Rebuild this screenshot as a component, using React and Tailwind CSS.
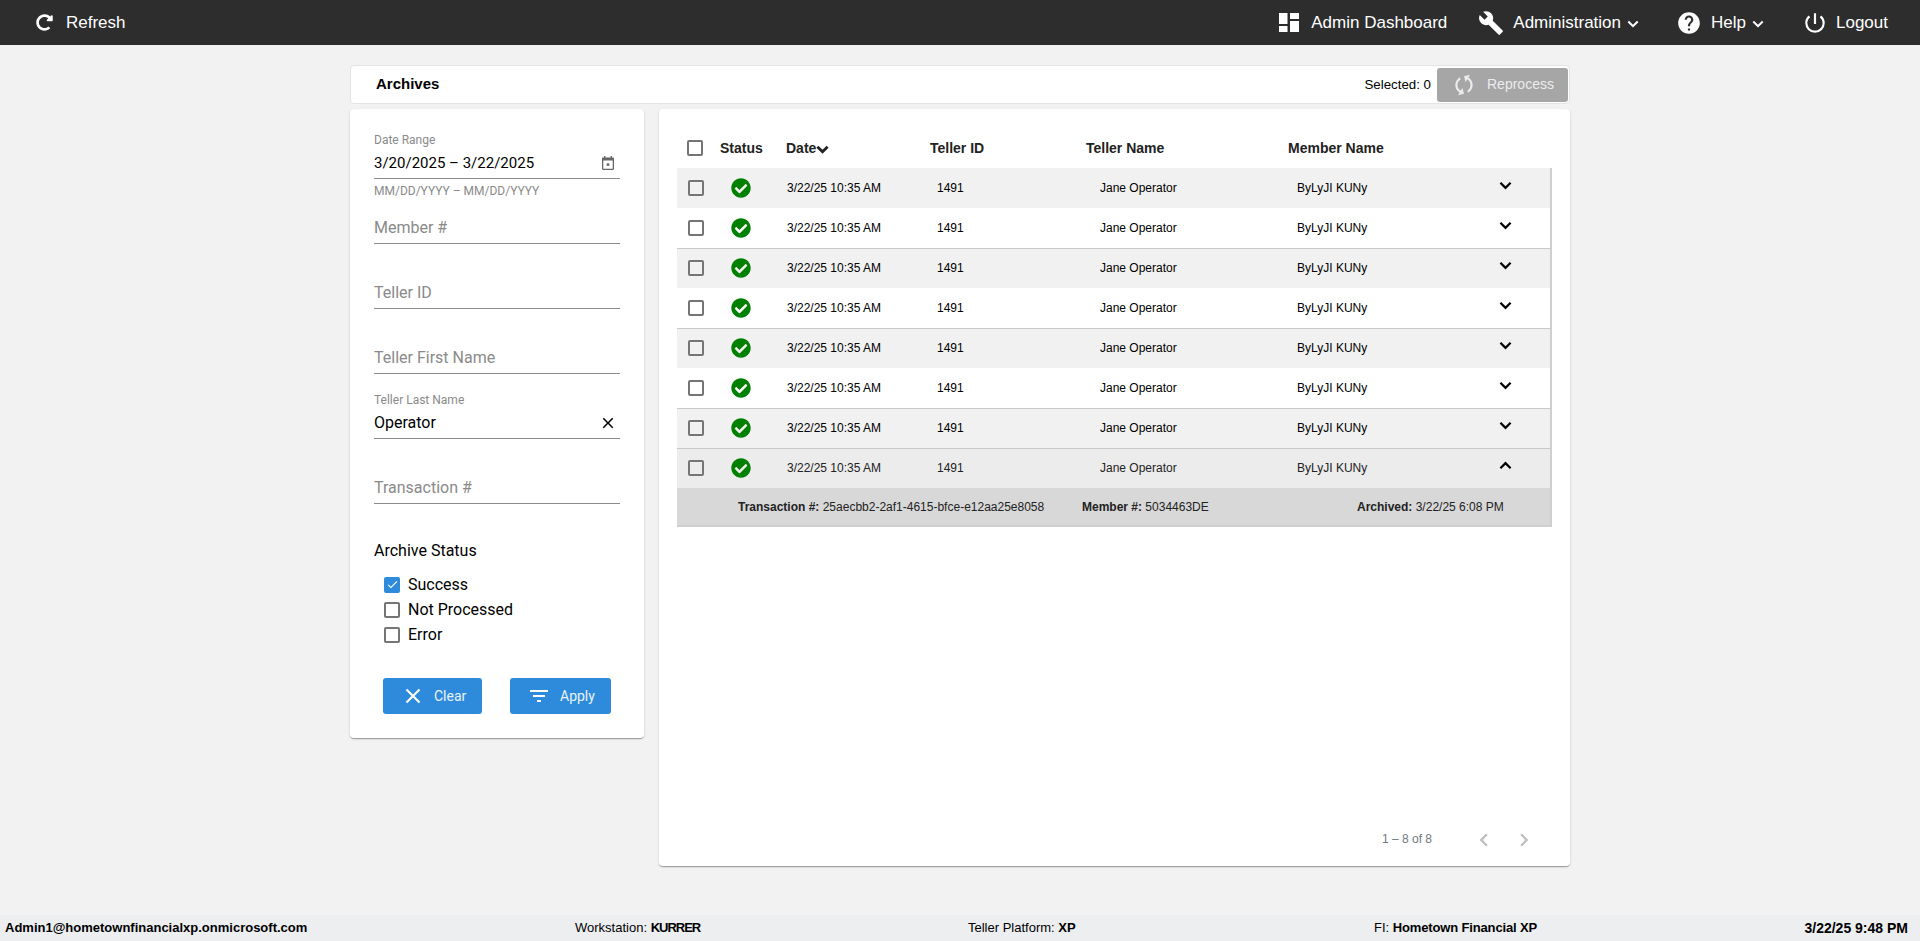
import { MdBuild, MdHelp, MdPowerSettingsNew, MdClose, MdFilterList, MdCached, MdChevronLeft, MdChevronRight, MdCheck } from 'react-icons/md'
import { FaCheckCircle, FaRedoAlt } from 'react-icons/fa'

const cardShadow = 'shadow-[0_2px_1px_-1px_rgba(0,0,0,0.2),0_1px_1px_0_rgba(0,0,0,0.14),0_1px_3px_0_rgba(0,0,0,0.12)]'

function Chevron({ up, className, width = 2.4 }) {
  return (
    <svg viewBox="0 0 14 9" className={className} fill="none" stroke="currentColor" strokeWidth={width}>
      <path d={up ? 'M1.5 7.5 7 2l5.5 5.5' : 'M1.5 1.5 7 7l5.5-5.5'} />
    </svg>
  )
}

function DashIcon() {
  return (
    <svg viewBox="0 0 20 19" className="w-[20px] h-[19px]" fill="#fff">
      <rect x="0" y="0" width="8.500" height="11" />
      <rect x="0" y="13" width="8.500" height="6" />
      <rect x="11" y="0" width="9" height="6" />
      <rect x="11" y="8" width="9" height="11" />
    </svg>
  )
}

function CalendarIcon() {
  return (
    <svg viewBox="0 0 12 14" className="w-3 h-[14px]" fill="#666">
      <path d="M2 0h1.400v1.400h5.200V0H10v1.400h.8c.7 0 1.200.5 1.200 1.200v10.200c0 .7-.5 1.200-1.200 1.200H1.200C.5 14 0 13.500 0 12.800V2.600c0-.7.5-1.200 1.200-1.200H2V0zM1.300 4.600v8.100h9.400V4.600H1.300z" />
      <rect x="4.700" y="7.300" width="2.600" height="2.600" />
    </svg>
  )
}

function Check({ checked, size = 'w-4 h-4' }) {
  if (checked) {
    return (
      <span className={`${size} rounded-[2px] bg-[#2e8bdb] flex items-center justify-center shrink-0`}>
        <MdCheck className="text-white w-[13px] h-[13px]" />
      </span>
    )
  }
  return <span className={`${size} rounded-[2px] border-2 border-[#757575] bg-transparent shrink-0`} />
}

function NavItem({ icon, label, caret, className }) {
  return (
    <div className={`flex items-center text-white text-[17px] ${className || ''}`}>
      {icon}
      <span>{label}</span>
      {caret && <Chevron className="w-[12px] h-[8px] ml-[6px] mt-[2px]" />}
    </div>
  )
}

function Field({ label, value, trailing, hint, className, valueClass }) {
  return (
    <div className={`relative w-[246px] ${className || ''}`}>
      <div className="h-[53px] border-b border-[#8c8c8c] flex flex-col justify-end pb-[3px]">
        {value && label && <div className="text-[12px] leading-[14px] text-[#8a8a8a] mb-[4px]">{label}</div>}
        <div className="flex items-center justify-between h-[24px] text-[16px]">
          {value
            ? <span className={`text-black ${valueClass || ''}`}>{value}</span>
            : <span className="text-[#8a8a8a]">{label}</span>}
          {trailing && <span className="flex items-center">{trailing}</span>}
        </div>
      </div>
      {hint && <div className="text-[12px] leading-[14px] text-[#8a8a8a] mt-[5px]">{hint}</div>}
    </div>
  )
}

function StatusOption({ label, checked }) {
  return (
    <div className="flex items-center h-[25px] text-[16px] text-black">
      <Check checked={checked} />
      <span className="ml-[8px]">{label}</span>
    </div>
  )
}

function Row({ shade, border, open }) {
  return (
    <div className={`flex items-center h-[40px] text-[12px] ${shade} ${border ? 'border-t border-[#c8c8c8] pb-[1px]' : ''} ${open ? 'text-[#222]' : 'text-black'}`}>
      <div className="w-[33px] pl-[11px] flex"><Check /></div>
      <div className="w-[62px] flex justify-center"><FaCheckCircle className="w-5 h-5 text-[#008000]" /></div>
      <div className="w-[158px] pl-[15px]">3/22/25 10:35 AM</div>
      <div className="w-[170px] pl-[7px]">1491</div>
      <div className="w-[197px]">Jane Operator</div>
      <div className="w-[188px]">ByLyJI KUNy</div>
      <div className="w-[40px] flex justify-center mb-[6px]"><Chevron up={open} className="w-[13px] h-[9px] text-black" /></div>
    </div>
  )
}

const shades = ['bg-[#f1f1f1]', 'bg-white', 'bg-[#f1f1f1]', 'bg-white', 'bg-[#f1f1f1]', 'bg-white', 'bg-[#f1f1f1]', 'bg-[#ececec]']

export default function App() {
  return (
    <div className="h-[941px] flex flex-col bg-[#f2f2f2] overflow-hidden font-['Roboto','Liberation_Sans',sans-serif]">
      {/* Top bar */}
      <header className="h-[45px] shrink-0 bg-[#2d2d2d] flex items-center justify-between pl-[36px] pr-[32px] font-['Liberation_Sans',Arial,sans-serif]">
        <NavItem icon={<FaRedoAlt className="w-[17px] h-[17px] mr-[13px]" />} label="Refresh" />
        <div className="flex items-center">
          <NavItem icon={<span className="mr-[12px] flex"><DashIcon /></span>} label="Admin Dashboard" />
          <NavItem className="ml-[31px]" icon={<MdBuild className="w-[26px] h-[26px] mr-[9px]" />} label="Administration" caret />
          <NavItem className="ml-[37px]" icon={<MdHelp className="w-[26px] h-[26px] mr-[9px]" />} label="Help" caret />
          <NavItem className="ml-[38px]" icon={<MdPowerSettingsNew className="w-[26px] h-[26px] mr-[8px]" />} label="Logout" />
        </div>
      </header>

      <main className="flex-1 w-[1220px] mx-auto pt-[20px] pb-[49px] flex flex-col">
        {/* Title bar */}
        <div className="h-[39px] shrink-0 bg-white rounded-[4px] border border-[#e3e3e3] flex items-center justify-between pl-[25px] pr-[1px]">
          <span className="text-[15px] font-bold text-black font-['Liberation_Sans',sans-serif]">Archives</span>
          <div className="flex items-center font-['Liberation_Sans',sans-serif]">
            <span className="text-[13.3px] text-black mr-[6px]">Selected: 0</span>
            <div className="w-[131px] h-[34px] rounded-[3px] bg-[#a6a6a6] flex items-center text-[14px] text-[#ececec]">
              <MdCached className="w-[26px] h-[26px] ml-[14px] -rotate-[60deg]" />
              <span className="ml-[10px]">Reprocess</span>
            </div>
          </div>
        </div>

        <div className="flex-1 flex mt-[5px] gap-[15px]">
          {/* Filters */}
          <aside className={`w-[294px] h-[629px] bg-white rounded-[4px] pl-[24px] ${cardShadow}`}>
            <Field className="mt-[17px]" label="Date Range" value="3/20/2025 – 3/22/2025" valueClass="text-[15px]" trailing={<span className="mr-[6px] flex"><CalendarIcon /></span>} hint="MM/DD/YYYY – MM/DD/YYYY" />
            <Field className="-mt-[7px]" label="Member #" />
            <Field className="mt-[12px]" label="Teller ID" />
            <Field className="mt-[12px]" label="Teller First Name" />
            <Field className="mt-[12px]" label="Teller Last Name" value="Operator" trailing={<MdClose className="w-[18px] h-[18px] mr-[3px] text-black" />} />
            <Field className="mt-[12px]" label="Transaction #" />
            <div className="mt-[37px] text-[16px] leading-[20px] text-black">Archive Status</div>
            <div className="mt-[11px] ml-[10px]">
              <StatusOption label="Success" checked />
              <StatusOption label="Not Processed" />
              <StatusOption label="Error" />
            </div>
            <div className="mt-[31px] ml-[9px] flex gap-[28px] text-[14px] text-[#eaf3fb]">
              <div className="w-[99px] h-[36px] rounded-[3px] bg-[#2e8bdb] flex items-center pl-[20px]">
                <MdClose className="w-[20px] h-[20px] text-white scale-125" />
                <span className="ml-[11px]">Clear</span>
              </div>
              <div className="w-[101px] h-[36px] rounded-[3px] bg-[#2e8bdb] flex items-center pl-[17px]">
                <MdFilterList className="w-[24px] h-[24px] text-white" />
                <span className="ml-[9px]">Apply</span>
              </div>
            </div>
          </aside>

          {/* Results */}
          <section className={`flex-1 flex flex-col bg-white rounded-[4px] pl-[18px] ${cardShadow} font-['Liberation_Sans',sans-serif]`}>
            <div className="h-[59px] shrink-0 flex items-end pb-[12px] text-[14px] leading-[16px] font-bold text-[#222]">
              <div className="w-[43px] pl-[10px] flex"><Check /></div>
              <div className="w-[66px]">Status</div>
              <div className="w-[144px] flex items-center">Date<Chevron width={3} className="w-[13px] h-[9px] mt-[2px] text-[#222]" /></div>
              <div className="w-[156px]">Teller ID</div>
              <div className="w-[202px]">Teller Name</div>
              <div>Member Name</div>
            </div>
            <div className="w-[875px] border-r-2 border-[#cfcfcf]">
              {shades.map((shade, i) => (
                <Row key={i} shade={shade} border={(i > 0 && i % 2 === 0) || i === 7} open={i === 7} />
              ))}
              <div className="h-[39px] bg-[#d8d8d8] border-b-2 border-[#cfcfcf] flex items-center text-[12px] text-[#222]">
                <div className="w-[405px] pl-[61px]"><b>Transaction #:</b> 25aecbb2-2af1-4615-bfce-e12aa25e8058</div>
                <div className="w-[275px]"><b>Member #:</b> 5034463DE</div>
                <div><b>Archived:</b> 3/22/25 6:08 PM</div>
              </div>
            </div>
            <div className="mt-auto h-[40px] flex items-start justify-end pr-[33px]">
              <span className="text-[12px] text-[#6f7780] mt-[4px] mr-[39px]">1 – 8 of 8</span>
              <MdChevronLeft className="w-[26px] h-[26px] mt-[1px] text-[#bdbdbd]" />
              <MdChevronRight className="w-[26px] h-[26px] mt-[1px] text-[#bdbdbd] ml-[14px]" />
            </div>
          </section>
        </div>
      </main>

      {/* Status bar */}
      <footer className="h-[26px] shrink-0 bg-[#eceef0] flex items-center text-[13px] text-black font-['Liberation_Sans',sans-serif]">
        <div className="w-[575px] pl-[5px] font-bold">Admin1@hometownfinancialxp.onmicrosoft.com</div>
        <div className="w-[393px]">Workstation: <b className="tracking-[-1px]">KURRER</b></div>
        <div className="w-[406px]">Teller Platform: <b>XP</b></div>
        <div className="flex-1">FI: <b className="tracking-[-0.15px]">Hometown Financial XP</b></div>
        <div className="pr-[12px] font-bold text-[14px]">3/22/25 9:48 PM</div>
      </footer>
    </div>
  )
}
